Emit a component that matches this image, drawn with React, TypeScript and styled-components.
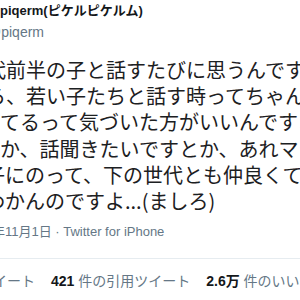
import React from "react";
import styled, { createGlobalStyle } from "styled-components";

type Line = {
  text: string;
  shift: number;
};

const lines: Line[] = [
  { text: "代前半の子と話すたびに思うんですけど", shift: -14 },
  { text: "ら、若い子たちと話す時ってちゃんと", shift: -14 },
  { text: "てるって気づいた方がいいんですよ", shift: 0 },
  { text: "か、話聞きたいですとか、あれマジ", shift: 0 },
  { text: "子にのって、下の世代とも仲良くて", shift: -15 },
  { text: "わかんのですよ...(ましろ)", shift: -15 },
];

const GlobalStyle = createGlobalStyle`
  html, body {
    margin: 0;
    padding: 0;
    background: #ffffff;
  }
`;

const App = () => {
  return (
    <>
      <GlobalStyle />
      <Page>
        <Header>
          <Name>piqerm(ピケルピケルム)</Name>
          <Handle $shift={-13}>@piqerm</Handle>
        </Header>
        <Body>
          {lines.map((l, i) => (
            <BodyLine key={i} $shift={l.shift}>
              {l.text}
            </BodyLine>
          ))}
        </Body>
        <Meta $shift={-37}>2020年11月1日 · Twitter for iPhone</Meta>
        <Divider />
        <Stats>
          <Stat $shift={-35}>リツイート</Stat>
          <Stat>
            <b>421</b> 件の引用ツイート
          </Stat>
          <Stat>
            <b>2.6万</b> 件のいいね
          </Stat>
        </Stats>
      </Page>
    </>
  );
};

export default App;

const Page = styled.div`
  width: 300px;
  height: 300px;
  overflow: hidden;
  background: #ffffff;
  display: flex;
  flex-direction: column;
  padding-top: 1px;
  box-sizing: border-box;
  font-family: "Liberation Sans", "Noto Sans CJK JP", sans-serif;
  color: #14171a;
`;

const Header = styled.div`
  display: flex;
  flex-direction: column;
  gap: 1px;
`;

const Name = styled.div`
  font-size: 13px;
  font-weight: 700;
  line-height: 20px;
  white-space: nowrap;
`;

const Handle = styled.div<{ $shift: number }>`
  font-size: 14px;
  line-height: 20px;
  color: #657786;
  white-space: nowrap;
  margin-left: ${({ $shift }) => $shift}px;
`;

const Body = styled.div`
  display: flex;
  flex-direction: column;
  margin-top: 15px;
  font-family: "Noto Sans CJK JP", sans-serif;
  font-size: 20px;
  line-height: 26.2px;
  color: #1c2022;
`;

const BodyLine = styled.div<{ $shift: number }>`
  white-space: nowrap;
  margin-left: ${({ $shift }) => $shift}px;
`;

const Meta = styled.div<{ $shift: number }>`
  margin-top: 8px;
  font-size: 13px;
  line-height: 20px;
  color: #657786;
  white-space: nowrap;
  margin-left: ${({ $shift }) => $shift}px;
`;

const Divider = styled.div`
  margin-top: 16px;
  height: 1px;
  background: #e6ecf0;
`;

const Stats = styled.div`
  display: flex;
  gap: 16px;
  margin-top: 12px;
  font-size: 14px;
  line-height: 20px;
  color: #657786;
  white-space: nowrap;

  b {
    color: #14171a;
    font-weight: 700;
  }
`;

const Stat = styled.span<{ $shift?: number }>`
  margin-left: ${({ $shift }) => $shift ?? 0}px;
`;
